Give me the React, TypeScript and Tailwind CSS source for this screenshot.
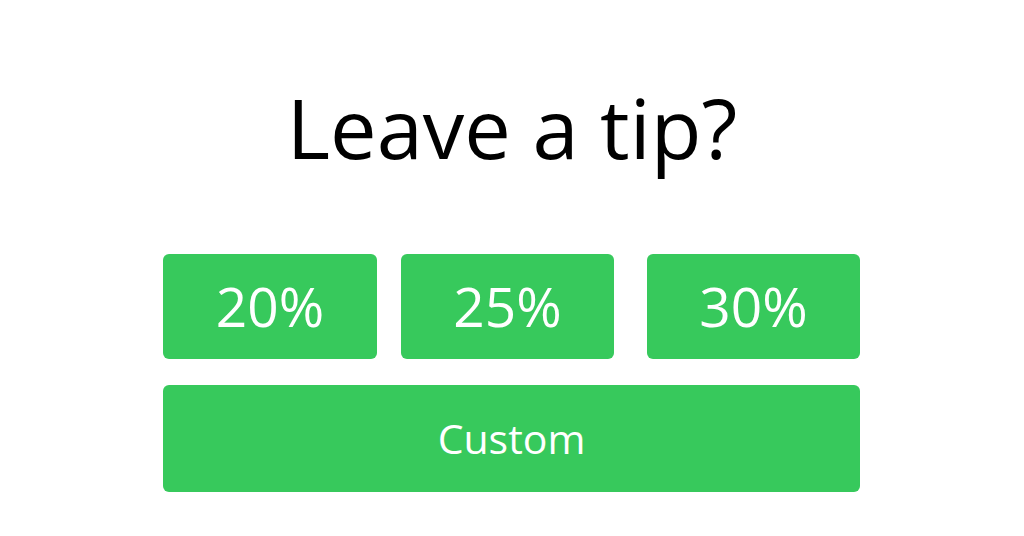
export default function App() {
  const tips = [
    { label: '20%', cls: 'w-[214px]' },
    { label: '25%', cls: 'w-[213px] ml-[24px]' },
    { label: '30%', cls: 'w-[213px] ml-[33px]' },
  ]

  return (
    <div className="h-[536px] w-full bg-white font-['Open_Sans',sans-serif] text-black">
      {/* Heading */}
      <h1 className="pt-[85px] text-center text-[83px] leading-none font-normal">Leave a tip?</h1>

      {/* Tip options */}
      <div className="ml-[163px] mt-[86px] w-[697px]">
        <div className="flex">
          {tips.map((t) => (
            <button
              key={t.label}
              className={`${t.cls} flex h-[105px] items-center justify-center rounded-[6px] bg-[#37c95c] text-[55px] text-white`}
            >
              {t.label}
            </button>
          ))}
        </div>
        <button className="mt-[26px] flex h-[107px] w-full items-center justify-center rounded-[6px] bg-[#37c95c] text-[41px] text-white">
          Custom
        </button>
      </div>
    </div>
  )
}
